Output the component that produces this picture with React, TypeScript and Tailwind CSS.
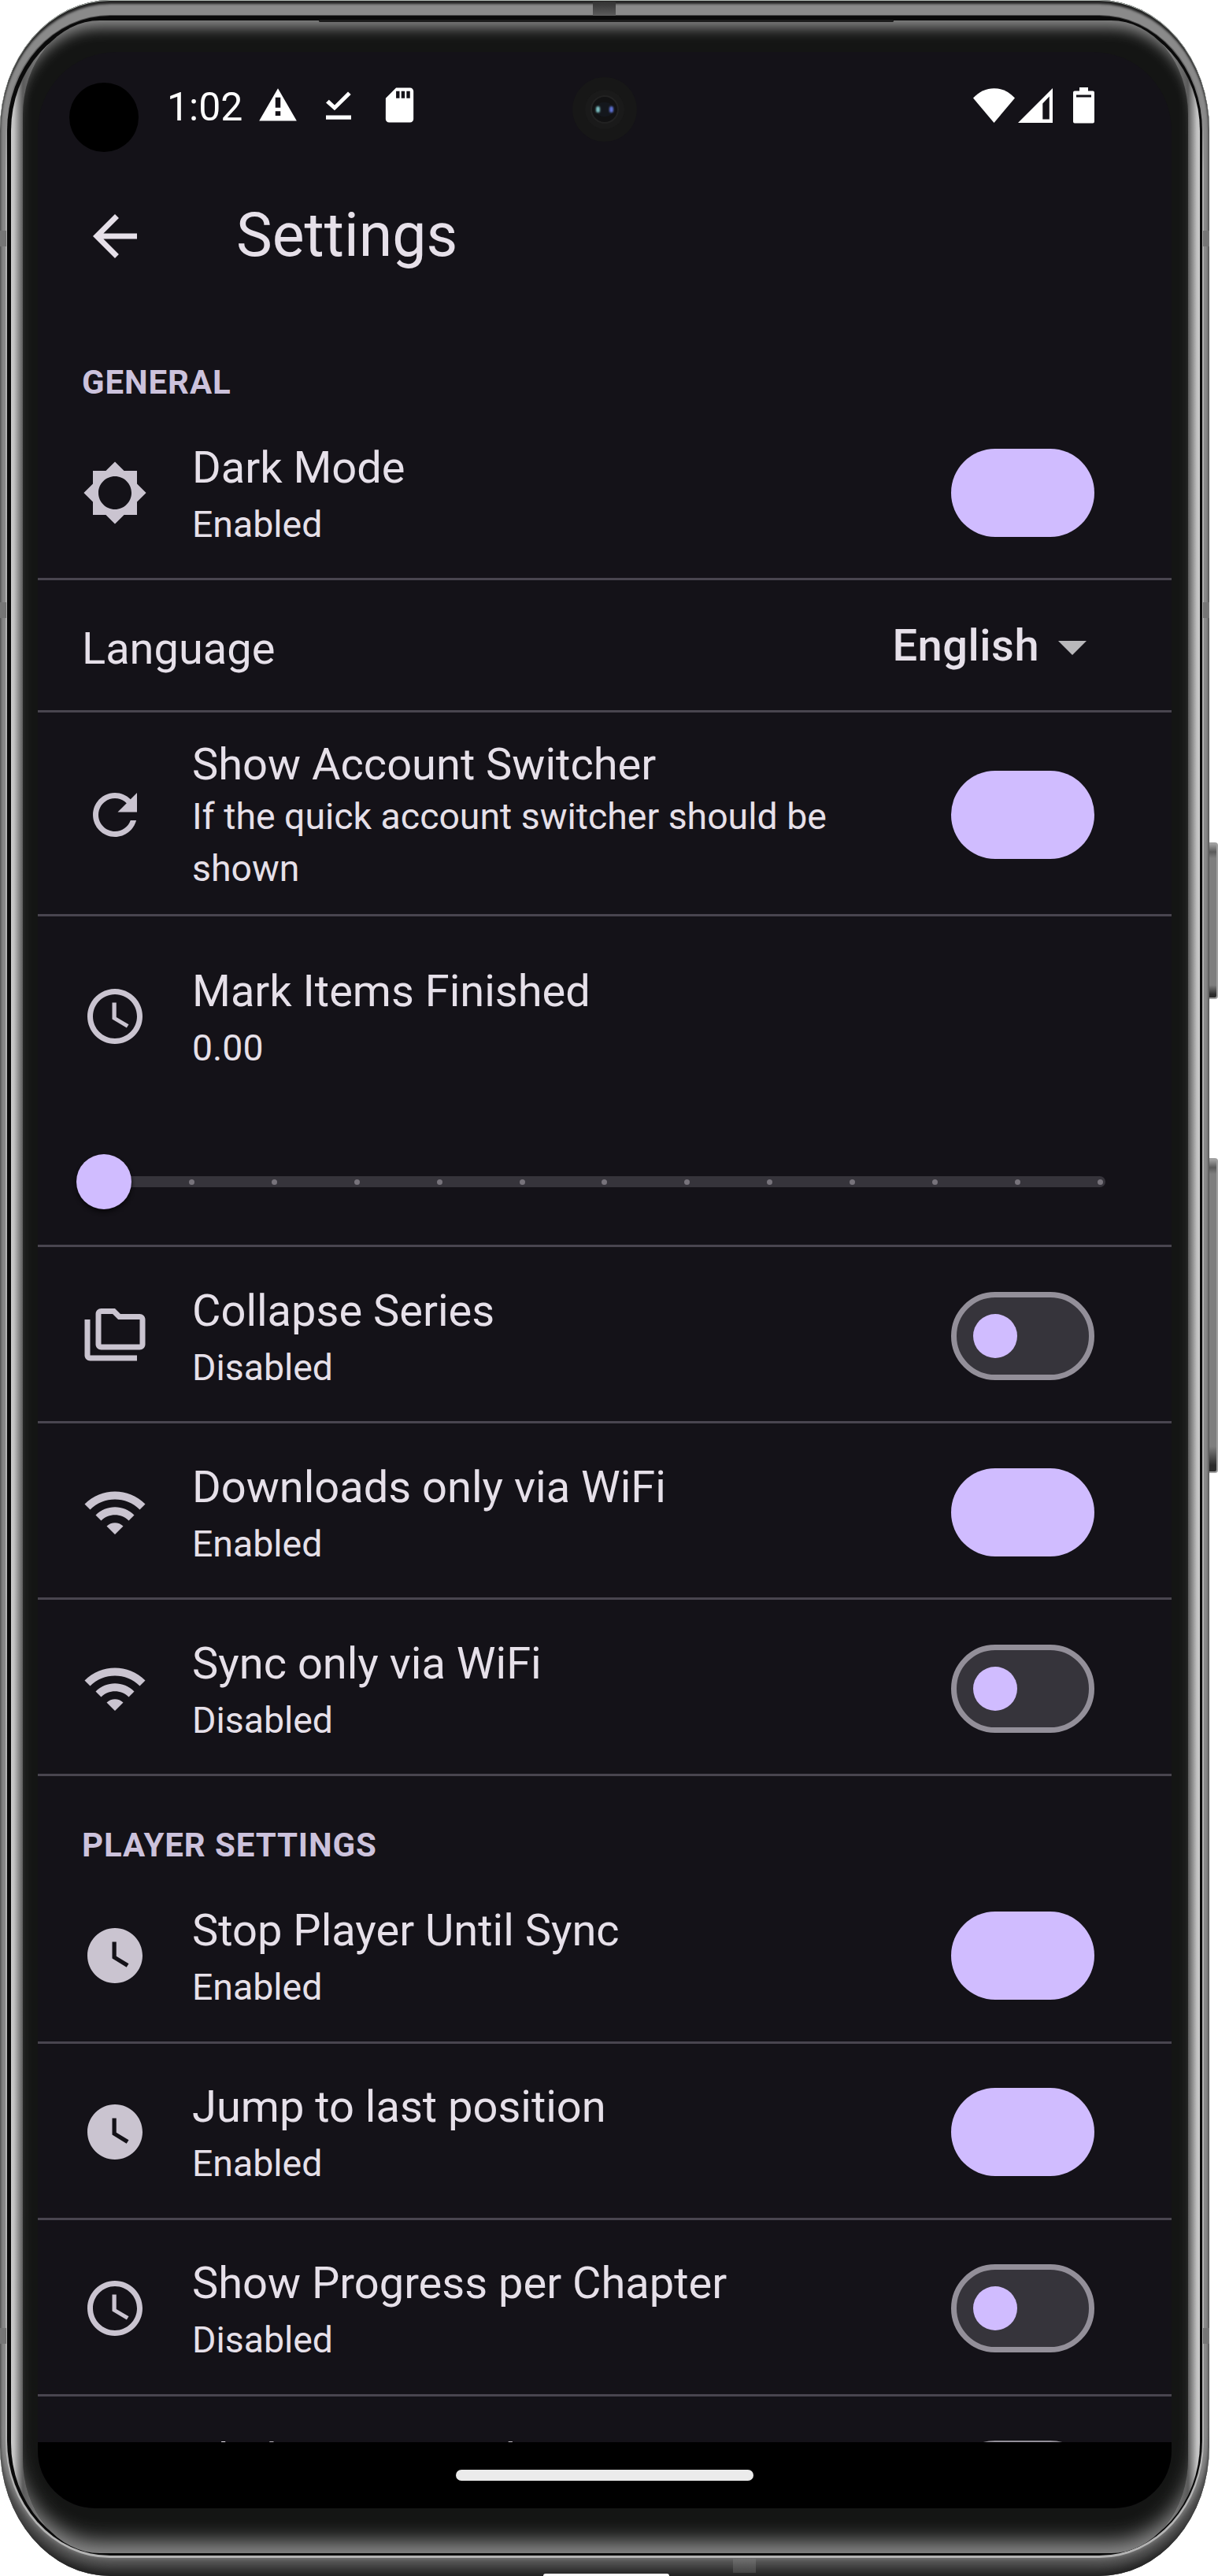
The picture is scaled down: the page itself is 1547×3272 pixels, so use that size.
import type { ReactNode } from "react";

const ICONS = {
  back: "M20 11H7.83l5.59-5.59L12 4l-8 8 8 8 1.41-1.41L7.83 13H20v-2z",
  brightness:
    "M20 15.31L23.31 12 20 8.69V4h-4.69L12 .69 8.69 4H4v4.69L.69 12 4 15.31V20h4.69L12 23.31 15.31 20H20v-4.69zM12 18c-3.31 0-6-2.69-6-6s2.69-6 6-6 6 2.69 6 6-2.69 6-6 6z",
  refresh:
    "M17.65 6.35C16.2 4.9 14.21 4 12 4c-4.42 0-7.99 3.58-7.99 8s3.57 8 7.99 8c3.73 0 6.84-2.55 7.73-6h-2.08c-.82 2.33-3.04 4-5.65 4-3.31 0-6-2.69-6-6s2.69-6 6-6c1.66 0 3.14.69 4.22 1.78L13 11h7V4l-2.35 2.35z",
  schedule:
    "M11.99 2C6.47 2 2 6.48 2 12s4.47 10 9.99 10C17.52 22 22 17.52 22 12S17.52 2 11.99 2zM12 20c-4.42 0-8-3.58-8-8s3.58-8 8-8 8 3.58 8 8-3.58 8-8 8zm.5-13H11v6l5.25 3.15.75-1.23-4.5-2.67z",
  watch:
    "M12 2C6.5 2 2 6.5 2 12s4.5 10 10 10 10-4.5 10-10S17.5 2 12 2zm4.2 14.2L11 13V7h1.5v5.2l4.5 2.7-.8 1.3z",
  folders:
    "M3 19h17v2H3c-1.1 0-2-.9-2-2V6h2v13zM23 6v9c0 1.1-.9 2-2 2H7c-1.1 0-2-.9-2-2l.01-11c0-1.1.89-2 1.99-2h5l2 2h7c1.1 0 2 .9 2 2zM7 15h14V6h-7.83l-2-2H7v11z",
  wifi: "M1 9l2 2c4.97-4.97 13.03-4.97 18 0l2-2C16.93 2.93 7.08 2.93 1 9zm8 8l3 3 3-3c-1.65-1.66-4.34-1.66-6 0zm-4-4l2 2c2.76-2.76 7.24-2.76 10 0l2-2C15.14 9.14 8.87 9.14 5 13z",
  warning: "M1 21h22L12 2 1 21zm12.5-3h-3v-2.7h3V18zm0-4.7h-3v-6h3v6z",
  sdCard:
    "M18 2h-8L4.02 8 4 20c0 1.1.9 2 2 2h12c1.1 0 2-.9 2-2V4c0-1.1-.9-2-2-2zm-6 6h-2V4h2v4zm3 0h-2V4h2v4zm3 0h-2V4h2v4z",
};

function Icon({ name, className }: { name: keyof typeof ICONS; className: string }) {
  return (
    <svg viewBox="0 0 24 24" fill="currentColor" className={`shrink-0 ${className}`}>
      <path d={ICONS[name]} />
    </svg>
  );
}

function Toggle({ on }: { on: boolean }) {
  if (on) return <div className="h-[112px] w-[182px] shrink-0 rounded-full bg-[#d0bcff]" />;
  return (
    <div className="flex h-[112px] w-[182px] shrink-0 items-center rounded-full border-[7px] border-[#938f99] bg-[#36343b] pl-[21px]">
      <div className="size-14 rounded-full bg-[#d0bcff]" />
    </div>
  );
}

function Title({ children }: { children: ReactNode }) {
  return <div className="text-[56px] leading-[66px] whitespace-nowrap">{children}</div>;
}

function Sub({ children }: { children: ReactNode }) {
  return <div className="text-[46.4px] leading-[66px]">{children}</div>;
}

type RowProps = {
  icon: keyof typeof ICONS;
  title: string;
  sub?: string;
  on: boolean;
  className?: string;
};

function Row({ icon, title, sub, on, className = "h-[224px]" }: RowProps) {
  return (
    <div className={`flex shrink-0 items-start border-b-[3px] border-[#49454f] pr-[98px] pl-14 ${className}`}>
      <Icon name={icon} className="mt-[70px] size-[84px] text-[#cac4d0]" />
      <div className="mt-[47px] ml-14 flex flex-1 flex-col gap-[6px]">
        <Title>{title}</Title>
        {sub && <Sub>{sub}</Sub>}
      </div>
      <div className="mt-14">
        <Toggle on={on} />
      </div>
    </div>
  );
}

function SectionHeader({ children, className }: { children: ReactNode; className: string }) {
  return (
    <div
      className={`shrink-0 pl-14 text-[42px] leading-[56px] font-bold tracking-[0.9px] text-[#ccc2dc] ${className}`}
    >
      {children}
    </div>
  );
}

function StatusBar() {
  return (
    <div className="flex h-[135px] shrink-0 items-center pr-[98px] pl-[164px] text-white">
      <div className="w-[115px] pt-[4px] text-[50px] leading-[60px]">1:02</div>
      <Icon name="warning" className="size-[52px]" />
      <svg viewBox="0 0 32 36" fill="currentColor" className="ml-[35px] h-9 w-8">
        <path d="M0 14.5L3.8 10.7 11 17.5 28 .5 31.7 4 11 24.3zM0 30.5h32v5.3H0z" />
      </svg>
      <Icon name="sdCard" className="ml-[35px] size-[53px]" />
      <svg viewBox="0 0 53 44" fill="currentColor" className="ml-auto h-11 w-[53px]">
        <path d="M0 12.5C15 -4 38 -4 53 12.5L26.5 44z" />
      </svg>
      <svg viewBox="0 0 44 44" fill="currentColor" className="ml-1 size-11">
        <path fillRule="evenodd" d="M0 44L44 0v44zM31.3 19.5V39.5h8.5V10.5z" />
      </svg>
      <svg viewBox="0 0 27 46" fill="currentColor" className="ml-[26px] h-[46px] w-[27px]">
        <path fillRule="evenodd" d="M8 0h11v4.5h6q2 0 2 2V43.5q0 2-2 2H2q-2 0-2-2V6.5q0-2 2-2h6zM4 9.5v3h19v-3z" />
      </svg>
    </div>
  );
}

function Slider() {
  return (
    <div className="relative mr-[84px] ml-[84px] flex h-[14px] items-center justify-between rounded-full bg-[#36343b] pr-[3px] pl-[3px]">
      {Array.from({ length: 13 }, (_, i) => (
        <div key={i} className="size-[7px] rounded-full bg-[#77737b]" />
      ))}
      <div className="absolute -top-7 -left-[35px] size-[70px] rounded-full bg-[#d0bcff] shadow-[0_4px_5px_#0a090c]" />
    </div>
  );
}

function Screen() {
  return (
    <div className="relative flex h-[3120px] w-[1440px] flex-col overflow-hidden rounded-t-[100px] rounded-b-[73px] bg-[#141218] text-[#e6e0e9]">
      <StatusBar />
      <div className="flex h-[199px] shrink-0 items-center pl-14">
        <Icon name="back" className="-mt-px size-[84px]" />
        <div className="-mt-1 ml-28 text-[77px] leading-[98px]">Settings</div>
      </div>

      <div className="flex h-[2702px] flex-col overflow-hidden">
        <SectionHeader className="h-[114px] pt-[58px]">GENERAL</SectionHeader>
        <Row icon="brightness" title="Dark Mode" sub="Enabled" on className="h-[223px]" />

        <div className="flex h-[168px] shrink-0 items-start border-b-[3px] border-[#49454f] pr-[108px] pl-14">
          <div className="mt-[54px]">
            <Title>Language</Title>
          </div>
          <div className="mt-[50px] ml-auto text-[56px] leading-[66px] font-medium tracking-[0.5px]">English</div>
          <svg viewBox="0 0 36 18" className="mt-[77px] ml-6 h-[18px] w-9" fill="#b9b8bb">
            <path d="M0 0h36L18 18z" />
          </svg>
        </div>

        <div className="flex h-[259px] shrink-0 items-start border-b-[3px] border-[#49454f] pr-[98px] pl-14">
          <Icon name="refresh" className="mt-[88px] size-[84px] text-[#cac4d0]" />
          <div className="mt-[33px] ml-14 w-[860px]">
            <Title>Show Account Switcher</Title>
            <Sub>If the quick account switcher should be shown</Sub>
          </div>
          <div className="mt-[74px] ml-auto">
            <Toggle on />
          </div>
        </div>

        <div className="h-[420px] shrink-0 border-b-[3px] border-[#49454f]">
          <div className="flex h-[330px] items-start pl-14">
            <Icon name="schedule" className="mt-[85px] size-[84px] text-[#cac4d0]" />
            <div className="mt-[62px] ml-14 flex flex-col gap-[6px]">
              <Title>Mark Items Finished</Title>
              <Sub>0.00</Sub>
            </div>
          </div>
          <Slider />
        </div>

        <Row icon="folders" title="Collapse Series" sub="Disabled" on={false} className="h-[224px] pt-px" />
        <Row icon="wifi" title="Downloads only via WiFi" sub="Enabled" on className="h-[224px] pt-px" />
        <Row icon="wifi" title="Sync only via WiFi" sub="Disabled" on={false} className="h-[224px] pt-px" />
        <SectionHeader className="h-[116px] pt-[60px]">PLAYER SETTINGS</SectionHeader>
        <Row icon="watch" title="Stop Player Until Sync" sub="Enabled" on />
        <Row icon="watch" title="Jump to last position" sub="Enabled" on />
        <Row icon="schedule" title="Show Progress per Chapter" sub="Disabled" on={false} />
        <Row icon="schedule" title="Shake to reset sleep timer" on={false} />
      </div>

      <div className="flex h-[84px] shrink-0 items-center justify-center bg-black">
        <div className="h-[14px] w-[378px] rounded-full bg-[#ebebeb]" />
      </div>

      <div className="absolute top-[39px] left-10 size-[88px] rounded-full bg-black" />
      <div className="absolute top-8 left-[679px] flex size-[82px] items-center justify-center rounded-full bg-[#171717]">
        <div className="flex size-[50px] items-center justify-center rounded-full bg-[#1a1a1a]">
          <div className="flex size-9 items-center justify-center rounded-full border-2 border-[#222222] bg-[#121213]">
            <div className="flex h-[18px] w-[22px] items-center justify-between rounded-full bg-[#14171c]">
              <div className="h-2 w-[5px] rounded-full bg-[#7cc0c2] blur-[1px]" />
              <div className="h-2 w-[5px] rounded-full bg-[#5f72d4] blur-[1px]" />
            </div>
          </div>
        </div>
      </div>
    </div>
  );
}

function SideBands({ side }: { side: string }) {
  return (
    <>
      <div className={`absolute top-[293px] h-[20px] w-[8px] bg-[#767676] ${side}`} />
      <div className={`absolute top-[765px] h-[20px] w-[8px] bg-[#767676] ${side}`} />
      <div className={`absolute top-[2957px] h-[20px] w-[8px] bg-[#767676] ${side}`} />
    </>
  );
}

function SideKey({ className }: { className: string }) {
  return (
    <div
      className={`absolute left-[1534px] w-[13px] rounded-r-[4px] border-2 border-l-0 border-[#a0a0a0] bg-[linear-gradient(180deg,#a0a0a0_0px,#5a5a5a_10px,#7e7e7e_18px,#7e7e7e_92%,#2c2c2c_98%)] ${className}`}
    />
  );
}

export default function App() {
  return (
    <div className="relative h-[3272px] w-[1547px] overflow-hidden bg-white" style={{ fontFamily: "Roboto, sans-serif" }}>
      <SideKey className="top-[1070px] h-[199px]" />
      <SideKey className="top-[1471px] h-[400px]" />
      <div className="relative h-[3272px] w-[1536px] rounded-[140px/165px] bg-[#8a8a8a] px-[7px] pt-[19px] pb-[23px] shadow-[inset_0_1px_0_#b4bcb6,inset_0_6px_3px_-1px_#222,inset_0_-22px_16px_-12px_#1d1d1d,inset_0_-26px_6px_-3px_#5c5c5c,inset_2px_0_2px_#6a6a6a,inset_-2px_0_2px_#6a6a6a]">
        <div className="h-[3230px] rounded-[133px/148px] bg-[linear-gradient(180deg,#4a4a4a_0px,#b0b0b0_200px,#b4b4b4_100%)] px-[2px] pt-[1px] pb-[3px]">
          <div className="h-[3226px] rounded-[131px/146px] bg-[#0a0a0a] pt-[6px] pr-[3px] pb-[3px] pl-[5px]">
            <div className="h-[3217px] rounded-[125px/140px] bg-[linear-gradient(90deg,#cccccc_0px,#c0c0c0_4px,#5c5c5c_15px,#808080_40px,#808080_1470px,#5c5c5c_1495px,#c0c0c0_1506px,#cccccc_1510px)] px-[15px]">
              <div className="h-[3217px] rounded-[98px/120px] bg-[#141514] pt-[40px] pl-[19px] shadow-[inset_0_24px_18px_-15px_#8c8c8c,inset_0_-30px_26px_-15px_#8c8c8c]">
                <Screen />
              </div>
            </div>
          </div>
        </div>
        <div className="absolute top-[2px] left-[753px] h-[18px] w-[29px] bg-linear-to-b from-[#333] to-[#5c5c5c]" />
        <div className="absolute top-[25px] left-[405px] h-[3px] w-[730px] rounded-full bg-[#1c1c1c]" />
        <div className="absolute top-[3250px] left-[931px] h-[18px] w-[29px] bg-linear-to-b from-[#707070] to-[#444]" />
        <div className="absolute top-[3269px] left-[690px] h-[6px] w-[160px] rounded-full bg-white" />
        <SideBands side="left-0" />
        <SideBands side="right-0" />
      </div>
    </div>
  );
}
